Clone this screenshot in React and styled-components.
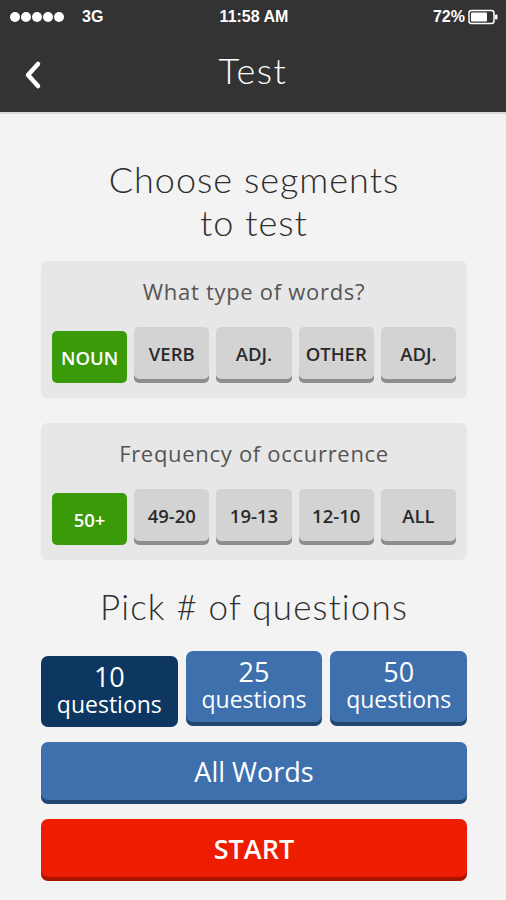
import React, {useState} from 'react';
import styled, {createGlobalStyle} from "styled-components";

const GlobalStyle = createGlobalStyle`
  html, body {
    margin: 0;
    padding: 0;
    background: #f3f3f3;
    font-family: "Open Sans", "Liberation Sans", sans-serif;
  }
`;

const Page = styled.div`
  width: 506px;
  min-height: 900px;
  background: #f3f3f3;
`;

const Header = styled.header`
  background: #333333;
  border-bottom: 2px solid #d8d8d8;
  color: white;
`;

const StatusBar = styled.div`
  height: 34px;
  display: flex;
  align-items: center;
  padding: 0 8px 0 10px;
  font-family: "Liberation Sans", Arial, sans-serif;
  font-size: 16px;
  font-weight: bold;
`;

const StatusLeft = styled.div`
  flex: 1;
  display: flex;
  align-items: center;
  gap: 18px;
`;

const Signal = styled.div`
  display: flex;
  gap: 1px;
`;

const Dot = styled.span`
  width: 10px;
  height: 10px;
  border-radius: 50%;
  background: white;
`;

const StatusRight = styled.div`
  flex: 1;
  display: flex;
  justify-content: flex-end;
  align-items: center;
  gap: 3px;
`;

const NavBar = styled.div`
  height: 78px;
  display: flex;
  align-items: center;
  justify-content: center;
  position: relative;
`;

const BackButton = styled.div`
  position: absolute;
  left: 22px;
  top: 26px;
  display: flex;
`;

const NavTitle = styled.h1`
  margin: 0 0 6px;
  font-family: Lato, "Open Sans", sans-serif;
  font-weight: 300;
  font-size: 36px;
  letter-spacing: 1.5px;
`;

const Content = styled.main`
  padding: 44px 39px 0 41px;
  display: flex;
  flex-direction: column;
`;

const Heading = styled.h2`
  margin: 0 0 ${props => props.$gap}px;
  text-align: center;
  font-family: Lato, "Open Sans", sans-serif;
  font-weight: 300;
  font-size: ${props => props.$size}px;
  line-height: 43px;
  color: #2e2e2e;
  letter-spacing: ${props => props.$spacing}px;
`;

const Panel = styled.section`
  background: #e7e7e7;
  border-radius: 6px;
  padding: 14px 11px 15px;
  margin-bottom: 25px;
  display: flex;
  flex-direction: column;
  align-items: center;
`;

const PanelTitle = styled.div`
  font-size: 22px;
  color: #555;
  line-height: 32px;
  margin-bottom: 20px;
  letter-spacing: 0.7px;
`;

const ChipRow = styled.div`
  display: grid;
  grid-template-columns: repeat(5, 1fr);
  gap: 7px;
  width: 100%;
  align-items: start;
`;

const Chip = styled.button`
  height: 52px;
  margin-top: ${props => props.$selected ? 4 : 0}px;
  border: none;
  border-radius: 5px;
  font-family: "Open Sans", sans-serif;
  font-weight: 600;
  font-size: 18.5px;
  color: ${props => props.$selected ? '#fff' : '#2a2a2a'};
  background: ${props => props.$selected ? '#3a9a0a' : '#d3d3d3'};
  box-shadow: ${props => props.$selected ? 'none' : '0 4px 0 #8e8e8e'};
  padding: 0;
  cursor: pointer;
`;

const QuestionRow = styled.div`
  display: grid;
  grid-template-columns: repeat(3, 1fr);
  gap: 8px;
  align-items: start;
  margin-bottom: 15px;
`;

const QuestionButton = styled.button`
  height: 71px;
  margin-top: ${props => props.$selected ? 5 : 0}px;
  border: none;
  border-radius: 7px;
  background: ${props => props.$selected ? '#0d3760' : '#3d70ad'};
  box-shadow: ${props => props.$selected ? 'none' : '0 4px 0 #21466f'};
  color: white;
  font-family: "Open Sans", sans-serif;
  font-size: 23px;
  line-height: 26px;
  padding: 0 0 2px;
  cursor: pointer;
`;

const QNumber = styled.span`
  font-size: 27px;
  font-weight: 500;
`;

const WideButton = styled.button`
  height: 58px;
  border: none;
  border-radius: 7px;
  background: ${props => props.$bg};
  box-shadow: 0 4px 0 ${props => props.$shade};
  color: white;
  font-family: "Open Sans", sans-serif;
  font-size: ${props => props.$size}px;
  font-weight: ${props => props.$weight};
  margin-bottom: ${props => props.$gap}px;
  cursor: pointer;
`;

function Battery() {
    return (
        <svg width="30" height="16" viewBox="0 0 30 16">
            <rect x="1" y="1.5" width="25" height="13" rx="2.5" fill="none" stroke="white" strokeWidth="1.5"/>
            <rect x="3" y="3.5" width="16" height="9" rx="1" fill="white"/>
            <rect x="27" y="5.5" width="2.5" height="5" rx="1" fill="white"/>
        </svg>
    );
}

const wordTypes = ['NOUN', 'VERB', 'ADJ.', 'OTHER', 'ADJ.'];
const frequencies = ['50+', '49-20', '19-13', '12-10', 'ALL'];
const counts = [10, 25, 50];

export default function App() {
    const [type, setType] = useState(0);
    const [freq, setFreq] = useState(0);
    const [count, setCount] = useState(10);

    return (
        <Page>
            <GlobalStyle/>
            <Header>
                <StatusBar>
                    <StatusLeft>
                        <Signal>
                            {[0, 1, 2, 3, 4].map(i => <Dot key={i}/>)}
                        </Signal>
                        <span>3G</span>
                    </StatusLeft>
                    <span>11:58 AM</span>
                    <StatusRight>
                        <span>72%</span>
                        <Battery/>
                    </StatusRight>
                </StatusBar>
                <NavBar>
                    <BackButton>
                        <svg width="22" height="30" viewBox="0 0 22 30">
                            <path d="M16 4 L6 15 L16 26" fill="none" stroke="white" strokeWidth="4.5"
                                  strokeLinecap="round" strokeLinejoin="round"/>
                        </svg>
                    </BackButton>
                    <NavTitle>Test</NavTitle>
                </NavBar>
            </Header>
            <Content>
                <Heading $size={36} $spacing={1} $gap={17}>Choose segments<br/>to test</Heading>
                <Panel>
                    <PanelTitle>What type of words?</PanelTitle>
                    <ChipRow>
                        {wordTypes.map((t, i) =>
                            <Chip key={i} $selected={type === i} onClick={() => setType(i)}>{t}</Chip>)}
                    </ChipRow>
                </Panel>
                <Panel>
                    <PanelTitle>Frequency of occurrence</PanelTitle>
                    <ChipRow>
                        {frequencies.map((f, i) =>
                            <Chip key={f} $selected={freq === i} onClick={() => setFreq(i)}>{f}</Chip>)}
                    </ChipRow>
                </Panel>
                <Heading $size={35} $spacing={1.2} $gap={23}>Pick # of questions</Heading>
                <QuestionRow>
                    {counts.map(c =>
                        <QuestionButton key={c} $selected={count === c} onClick={() => setCount(c)}>
                            <QNumber>{c}</QNumber><br/>questions
                        </QuestionButton>)}
                </QuestionRow>
                <WideButton $bg="#3d70ad" $shade="#21466f" $size={27} $weight={400} $gap={19}>All Words</WideButton>
                <WideButton $bg="#ee1c00" $shade="#a81400" $size={27} $weight={600} $gap={0}>START</WideButton>
            </Content>
        </Page>
    );
}
